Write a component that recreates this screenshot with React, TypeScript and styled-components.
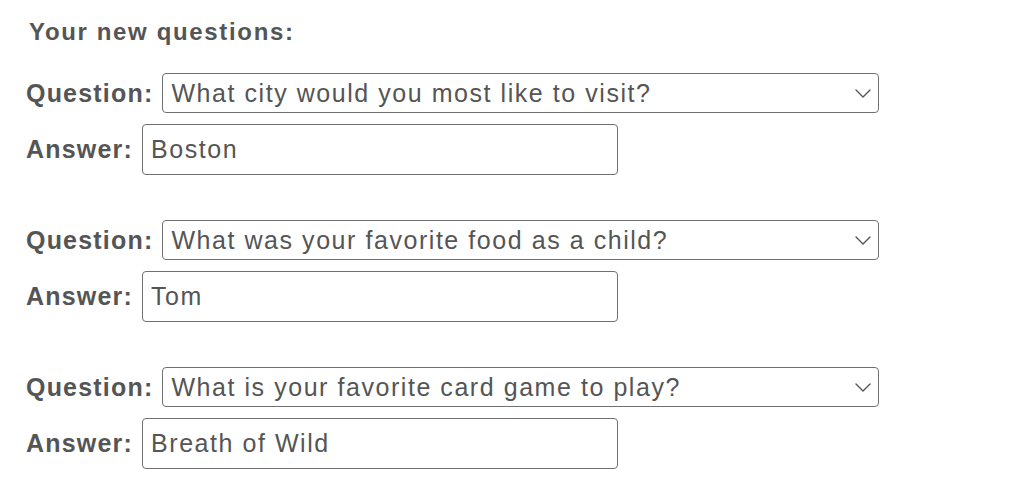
import React from "react";
import styled, { createGlobalStyle } from "styled-components";

const GlobalStyle = createGlobalStyle`
  html, body {
    margin: 0;
    padding: 0;
    background: #ffffff;
  }
  body {
    font-family: "Liberation Sans", Arial, Helvetica, sans-serif;
    color: #555555;
  }
`;

const Page = styled.div`
  padding: 18px 0 0 26px;
  display: flex;
  flex-direction: column;
`;

const Heading = styled.h2`
  margin: 0 0 27px 3px;
  font-size: 24px;
  font-weight: 700;
  letter-spacing: 1.65px;
  color: #555555;
`;

const Groups = styled.div`
  display: flex;
  flex-direction: column;
  gap: 45px;
`;

const Group = styled.div`
  display: flex;
  flex-direction: column;
  gap: 11px;
`;

const Row = styled.div`
  display: flex;
  align-items: center;
  gap: 9px;
`;

const Label = styled.label`
  font-size: 25px;
  font-weight: 700;
  letter-spacing: 1.2px;
  color: #555555;
  white-space: nowrap;
`;

const SelectWrap = styled.div`
  position: relative;
  display: flex;
`;

const Select = styled.select`
  appearance: none;
  -webkit-appearance: none;
  box-sizing: border-box;
  width: 717px;
  height: 40px;
  margin: 0;
  padding: 0 36px 0 8px;
  border: 1px solid #707070;
  border-radius: 4px;
  background: #ffffff;
  font-family: "Liberation Sans", Arial, Helvetica, sans-serif;
  font-size: 25px;
  letter-spacing: 1.55px;
  color: #555555;
  outline: none;
`;

const Chevron = styled.svg`
  position: absolute;
  right: 8px;
  top: 16px;
  width: 16px;
  height: 9px;
  pointer-events: none;
`;

const TextInput = styled.input`
  box-sizing: border-box;
  width: 476px;
  height: 51px;
  margin: 0;
  padding: 0 8px;
  border: 1px solid #707070;
  border-radius: 4px;
  background: #ffffff;
  font-family: "Liberation Sans", Arial, Helvetica, sans-serif;
  font-size: 25px;
  letter-spacing: 1.55px;
  color: #555555;
  outline: none;
`;

const QUESTIONS = [
  "What city would you most like to visit?",
  "What was your favorite food as a child?",
  "What is your favorite card game to play?",
  "What was the name of your first pet?",
  "What is your favorite movie?",
];

const ENTRIES = [
  { question: QUESTIONS[0], answer: "Boston" },
  { question: QUESTIONS[1], answer: "Tom" },
  { question: QUESTIONS[2], answer: "Breath of Wild" },
];

export default function App() {
  return (
    <>
      <GlobalStyle />
      <Page>
        <Heading>Your new questions:</Heading>
        <Groups>
          {ENTRIES.map((e, i) => (
            <Group key={i}>
              <Row>
                <Label htmlFor={`q${i}`}>Question:</Label>
                <SelectWrap>
                  <Select id={`q${i}`} defaultValue={e.question}>
                    {QUESTIONS.map((q) => (
                      <option key={q} value={q}>
                        {q}
                      </option>
                    ))}
                  </Select>
                  <Chevron viewBox="0 0 16 9" fill="none">
                    <polyline
                      points="1,1 8,8 15,1"
                      stroke="#555555"
                      strokeWidth="1.4"
                      strokeLinecap="round"
                      strokeLinejoin="round"
                    />
                  </Chevron>
                </SelectWrap>
              </Row>
              <Row>
                <Label htmlFor={`a${i}`}>Answer:</Label>
                <TextInput id={`a${i}`} type="text" defaultValue={e.answer} />
              </Row>
            </Group>
          ))}
        </Groups>
      </Page>
    </>
  );
}
